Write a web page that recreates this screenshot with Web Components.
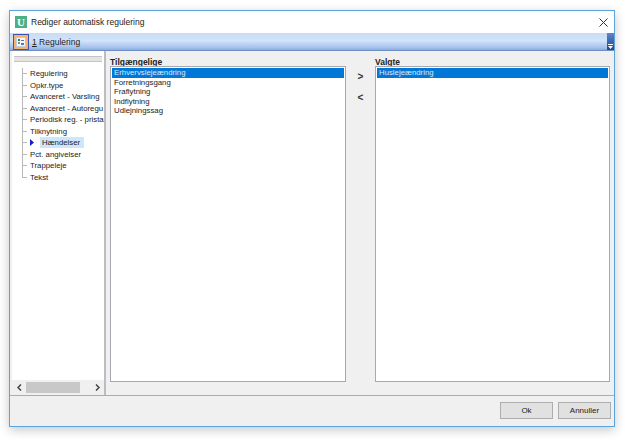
<!DOCTYPE html>
<html>
<head>
<meta charset="utf-8">
<style>
  html, body { margin: 0; background: #fff; }
  body { width: 625px; height: 444px; overflow: hidden; font: 7.800px "Liberation Sans", Arial, sans-serif; color: #222; }
  reg-list[slot="right"] { width: 235px; }
</style>
</head>
<body>
<reg-dialog>
  <span slot="title">Rediger automatisk regulering</span>
  <reg-tree slot="tree"></reg-tree>
  <reg-list slot="left" heading="Tilgængelige" items="Erhvervslejeændring|Forretningsgang|Fraflytning|Indflytning|Udlejningssag"></reg-list>
  <reg-list slot="right" heading="Valgte" items="Huslejeændring"></reg-list>
</reg-dialog>
<script>
customElements.define(
  "reg-tree",
  class RegTree extends HTMLElement {
    constructor() {
      super();
      this._shadowDOM = this.attachShadow({ mode: "open" });
    }

    connectedCallback() {
      const names = [
        "Regulering",
        "Opkr.type",
        "Avanceret - Varsling",
        "Avanceret - Autoregu",
        "Periodisk reg. - pristal",
        "Tilknytning",
        "Hændelser",
        "Pct. angivelser",
        "Trappeleje",
        "Tekst",
      ];
      const rows = names
        .map((e) => {
          const current = e === "Hændelser";
          return `
            <div class="row ${current ? "current" : ""}">
              <i></i>
              ${current ? '<svg width="4" height="7" viewBox="0 0 4 7"><path d="M0 0 4 3.5 0 7z" fill="#1a1ad0"/></svg>' : ""}
              <span>${e}</span>
            </div>`;
        })
        .join("");

      this._shadowDOM.innerHTML = `
        <style>
          :host { display: flex; flex-direction: column; height: 100%; background: #fff; }
          .grip { height: 4px; margin: 5px 2px 0 2px; border: 1px solid #c4c4c4; border-width: 1px 0; background: #e4e4e4; flex: none; }
          .tree { flex: 1; padding: 6px 0 0 10px; min-height: 0; overflow: hidden; position: relative; }
          .tree::before { content: ""; position: absolute; left: 10px; top: 6px; height: 109px; border-left: 1px solid #b8b8b8; }
          .row { display: flex; align-items: center; height: 11.500px; white-space: nowrap; }
          .row i { width: 5px; border-top: 1px solid #b8b8b8; margin-right: 3px; flex: none; }
          .current svg { flex: none; }
          .current span { margin-left: 6px; background: #cde6f9; padding: 1px 4px 1px 2px; line-height: 9px; }
          .scroll { height: 15px; background: #f0f0f0; display: flex; align-items: center; flex: none; }
          .scroll svg { flex: none; margin: 0 4px 0 4px; }
          .scroll svg:first-child { margin-left: 5px; }
          .thumb { width: 54px; height: 11px; background: #c8c8c8; }
          .gap { flex: 1; }
        </style>
        <div class="grip"></div>
        <div class="tree">${rows}</div>
        <div class="scroll">
          <svg width="5" height="7" viewBox="0 0 5 7"><path d="M4 .5 1 3.500 4 6.500" fill="none" stroke="#444" stroke-width="1.500"/></svg>
          <div class="thumb"></div>
          <div class="gap"></div>
          <svg width="5" height="7" viewBox="0 0 5 7"><path d="M1 .5 4 3.500 1 6.500" fill="none" stroke="#444" stroke-width="1.500"/></svg>
        </div>
      `;
    }
  }
);

customElements.define(
  "reg-list",
  class RegList extends HTMLElement {
    constructor() {
      super();
      this._shadowDOM = this.attachShadow({ mode: "open" });
    }

    connectedCallback() {
      const items = this.getAttribute("items")
        .split("|")
        .map((e, i) => `<div class="item ${i === 0 ? "sel" : ""}">${e}</div>`)
        .join("");

      this._shadowDOM.innerHTML = `
        <style>
          :host { display: flex; flex-direction: column; width: 236px; }
          h4 { margin: 0; font-size: 8.500px; font-weight: bold; line-height: 8px; color: #222; }
          .box { flex: 1; background: #fff; border: 1px solid #a8a8b0; padding: 1px; }
          .item { height: 9.500px; line-height: 9.500px; padding-left: 2px; white-space: nowrap; }
          .sel { background: #0078d7; color: #d8ecfb; }
        </style>
        <h4>${this.getAttribute("heading")}</h4>
        <div class="box">${items}</div>
      `;
    }
  }
);

customElements.define(
  "reg-dialog",
  class RegDialog extends HTMLElement {
    constructor() {
      super();
      this._shadowDOM = this.attachShadow({ mode: "open" });
    }

    connectedCallback() {
      this._shadowDOM.innerHTML = `
        <style>
          :host { display: block; padding: 10px 10px 0 9px; height: 444px; box-sizing: border-box; }
          .win { height: 417px; width: 606px; box-sizing: border-box; border: 1px solid #5ba3dd; background: #f0f0f0; display: flex; flex-direction: column; box-shadow: 0 3px 10px rgba(0,0,0,.22); }
          .title { height: 22px; background: #fff; display: flex; align-items: center; padding-left: 5px; font-size: 8.500px; flex: none; }
          .logo { width: 12px; height: 12px; background: #4caf86; color: #fff; font: bold 11px/12px "Liberation Serif", serif; text-align: center; margin-right: 4px; }
          .gap { flex: 1; }
          .close { margin-right: 6px; }
          .bar { height: 18px; flex: none; display: flex; align-items: center; background: linear-gradient(#c8dcf6, #d2e4fa 45%, #a6c2ec 85%, #8dacdf); border-bottom: 1px solid #6e8fc6; box-sizing: border-box; font-size: 8.500px; }
          .tool { width: 16px; height: 16px; box-sizing: border-box; margin: 0 3px 0 3px; background: #f6b26b; border: 1px solid #3f55b5; display: flex; align-items: center; justify-content: center; }
          .tool svg { display: block; }
          .chev { width: 7px; align-self: stretch; background: linear-gradient(#5d85cb, #1f478f); display: flex; align-items: flex-end; justify-content: center; padding-bottom: 1px; box-sizing: border-box; }
          u { text-decoration: underline; }
          .main { flex: 1; display: flex; min-height: 0; }
          .side { width: 96px; flex: none; box-sizing: border-box; padding-left: 2px; border-right: 2px solid #bdbdbd; }
          .side-in { height: 100%; }
          .rest { flex: 1; display: flex; padding: 7px 3px 13px 4px; min-width: 0; }
          .mid { width: 29px; flex: none; display: flex; flex-direction: column; align-items: center; padding-top: 14px; gap: 11px; font-weight: bold; font-size: 10px; line-height: 10px; color: #333; }
          .foot { height: 31px; flex: none; border-top: 1px solid #ababab; box-sizing: border-box; display: flex; justify-content: flex-end; align-items: center; gap: 5px; padding: 0 3px 2px 0; }
          .btn { width: 53px; height: 17px; box-sizing: border-box; background: #e1e1e1; border: 1px solid #adadad; text-align: center; line-height: 15px; font-size: 8px; color: #222; }
        </style>
        <div class="win">
          <div class="title">
            <div class="logo">U</div>
            <slot name="title"></slot>
            <div class="gap"></div>
            <svg class="close" width="9" height="9" viewBox="0 0 9 9"><path d="M.5.5l8 8M8.500.5l-8 8" stroke="#333" stroke-width="1" fill="none"/></svg>
          </div>
          <div class="bar">
            <div class="tool">
              <svg width="10" height="10" viewBox="0 0 10 10">
                <rect x=".5" y=".5" width="9" height="9" fill="#f4f6f8" stroke="#c4ccd6"/>
                <path d="M2 2h2v2H2z" fill="#2f7d55"/>
                <path d="M5 3h3v1H5zM5 6h3v2H5z" fill="#5577aa"/>
                <path d="M2 5h2v2H2z" fill="#7a8da8"/>
              </svg>
            </div>
            <span><u>1</u> Regulering</span>
            <div class="gap"></div>
            <div class="chev">
              <svg width="5" height="5" viewBox="0 0 5 5"><path d="M0 0h5v1H0zM0 2h5L2.500 5z" fill="#fff"/></svg>
            </div>
          </div>
          <div class="main">
            <div class="side"><div class="side-in"><slot name="tree"></slot></div></div>
            <div class="rest">
              <slot name="left"></slot>
              <div class="mid"><span>&gt;</span><span>&lt;</span></div>
              <slot name="right"></slot>
            </div>
          </div>
          <div class="foot">
            <div class="btn">Ok</div>
            <div class="btn">Annuller</div>
          </div>
        </div>
      `;
    }
  }
);
</script>
</body>
</html>
